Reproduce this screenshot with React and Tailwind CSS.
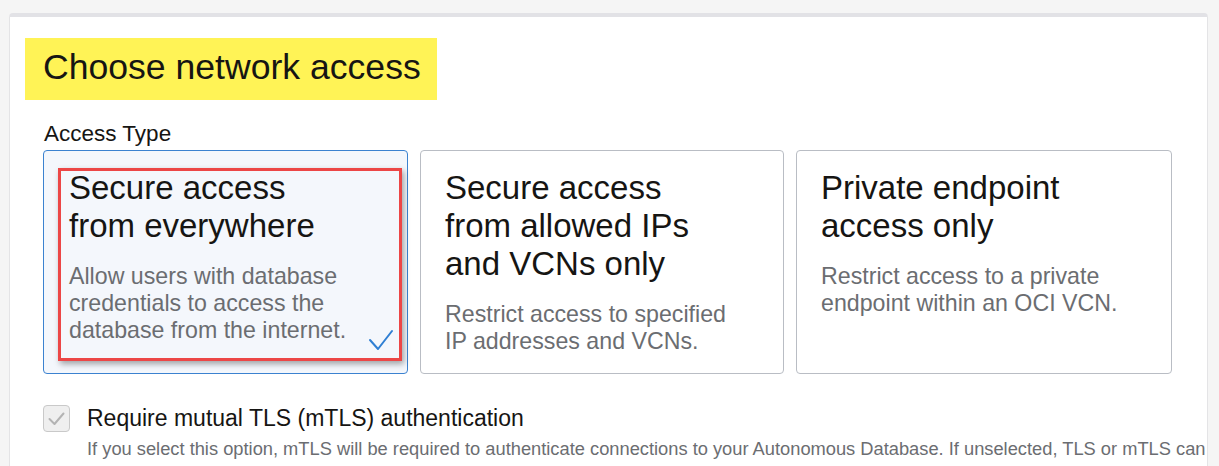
const cards = [
  {
    title: ['Secure access', 'from everywhere'],
    desc: ['Allow users with database', 'credentials to access the', 'database from the internet.'],
    width: 'w-[365px]',
    selected: true,
  },
  {
    title: ['Secure access', 'from allowed IPs', 'and VCNs only'],
    desc: ['Restrict access to specified', 'IP addresses and VCNs.'],
    width: 'w-[364px]',
  },
  {
    title: ['Private endpoint', 'access only'],
    desc: ['Restrict access to a private', 'endpoint within an OCI VCN.'],
    width: 'w-[376px]',
  },
]

function AccessCard({ card }) {
  return (
    <div
      className={
        card.selected
          ? `relative ${card.width} h-[224px] shrink-0 rounded-[4px] border border-[#3b82d0] bg-[#f4f7fc] px-[25px] pt-[18px]`
          : `relative ${card.width} h-[224px] shrink-0 rounded-[4px] border border-[#b9bdc4] bg-white px-[24px] pt-[18px]`
      }
    >
      <div className="text-[33px] leading-[38px] text-[#161513] whitespace-nowrap">
        {card.title.map((line) => (
          <div key={line}>{line}</div>
        ))}
      </div>
      <div className="mt-[18px] text-[23.2px] leading-[27px] text-[#6b6d71] whitespace-nowrap">
        {card.desc.map((line) => (
          <div key={line}>{line}</div>
        ))}
      </div>
      {card.selected && (
        <>
          <svg className="absolute left-[324px] top-[178px] w-[26px] h-[22px]" viewBox="0 0 26 22" fill="none">
            <path d="M2 11 L10 20 L24 2" stroke="#2f7fd3" strokeWidth="2" strokeLinecap="round" strokeLinejoin="round" />
          </svg>
          <div className="absolute left-[14px] top-[17px] w-[344px] h-[193px] border-[3px] border-[#ec4646] shadow-[2px_3px_6px_rgba(0,0,0,0.35)]" />
        </>
      )}
    </div>
  )
}

export default function App() {
  return (
    <div className="w-full h-[466px] overflow-hidden bg-[#f5f5f5] pt-[13px] pl-[9px] pr-[11px] font-['Liberation_Sans',Arial,sans-serif]">
      <div className="h-[460px] overflow-hidden rounded-t-[4px] border-t-4 border-x border-t-[#e2e2e6] border-x-[#e4e4e6] bg-white">
        <div className="ml-[15px] mt-[21px] inline-flex h-[62px] items-center bg-[#fff356] pl-[18px] pr-[16px]">
          <h1 className="mb-[3px] text-[35.6px] leading-none text-[#161513] whitespace-nowrap">Choose network access</h1>
        </div>

        <div className="pl-[33px]">
          <div className="mt-[20px] pl-[1px] text-[22.5px] leading-[27px] text-[#161513]">Access Type</div>

          <div className="mt-[3px] flex gap-[12px]">
            {cards.map((card) => (
              <AccessCard key={card.title.join(' ')} card={card} />
            ))}
          </div>

          <div className="mt-[31px] flex items-center gap-[17px]">
            <div className="flex h-[27px] w-[27px] shrink-0 items-center justify-center rounded-[4px] border border-[#c9c9c9] bg-[#efefef]">
              <svg className="w-[17px] h-[14px]" viewBox="0 0 17 14" fill="none">
                <path d="M1.5 7 L6.5 12 L15.5 1.5" stroke="#b3b3b3" strokeWidth="2" strokeLinecap="round" strokeLinejoin="round" />
              </svg>
            </div>
            <span className="text-[23px] leading-[27px] text-[#161513] whitespace-nowrap">
              Require mutual TLS (mTLS) authentication
            </span>
          </div>
          <div className="mt-[7px] pl-[44px] text-[18.3px] leading-[20px] text-[#6b6d71] whitespace-nowrap">
            If you select this option, mTLS will be required to authenticate connections to your Autonomous Database. If unselected, TLS or mTLS can be used.
          </div>
        </div>
      </div>
    </div>
  )
}
